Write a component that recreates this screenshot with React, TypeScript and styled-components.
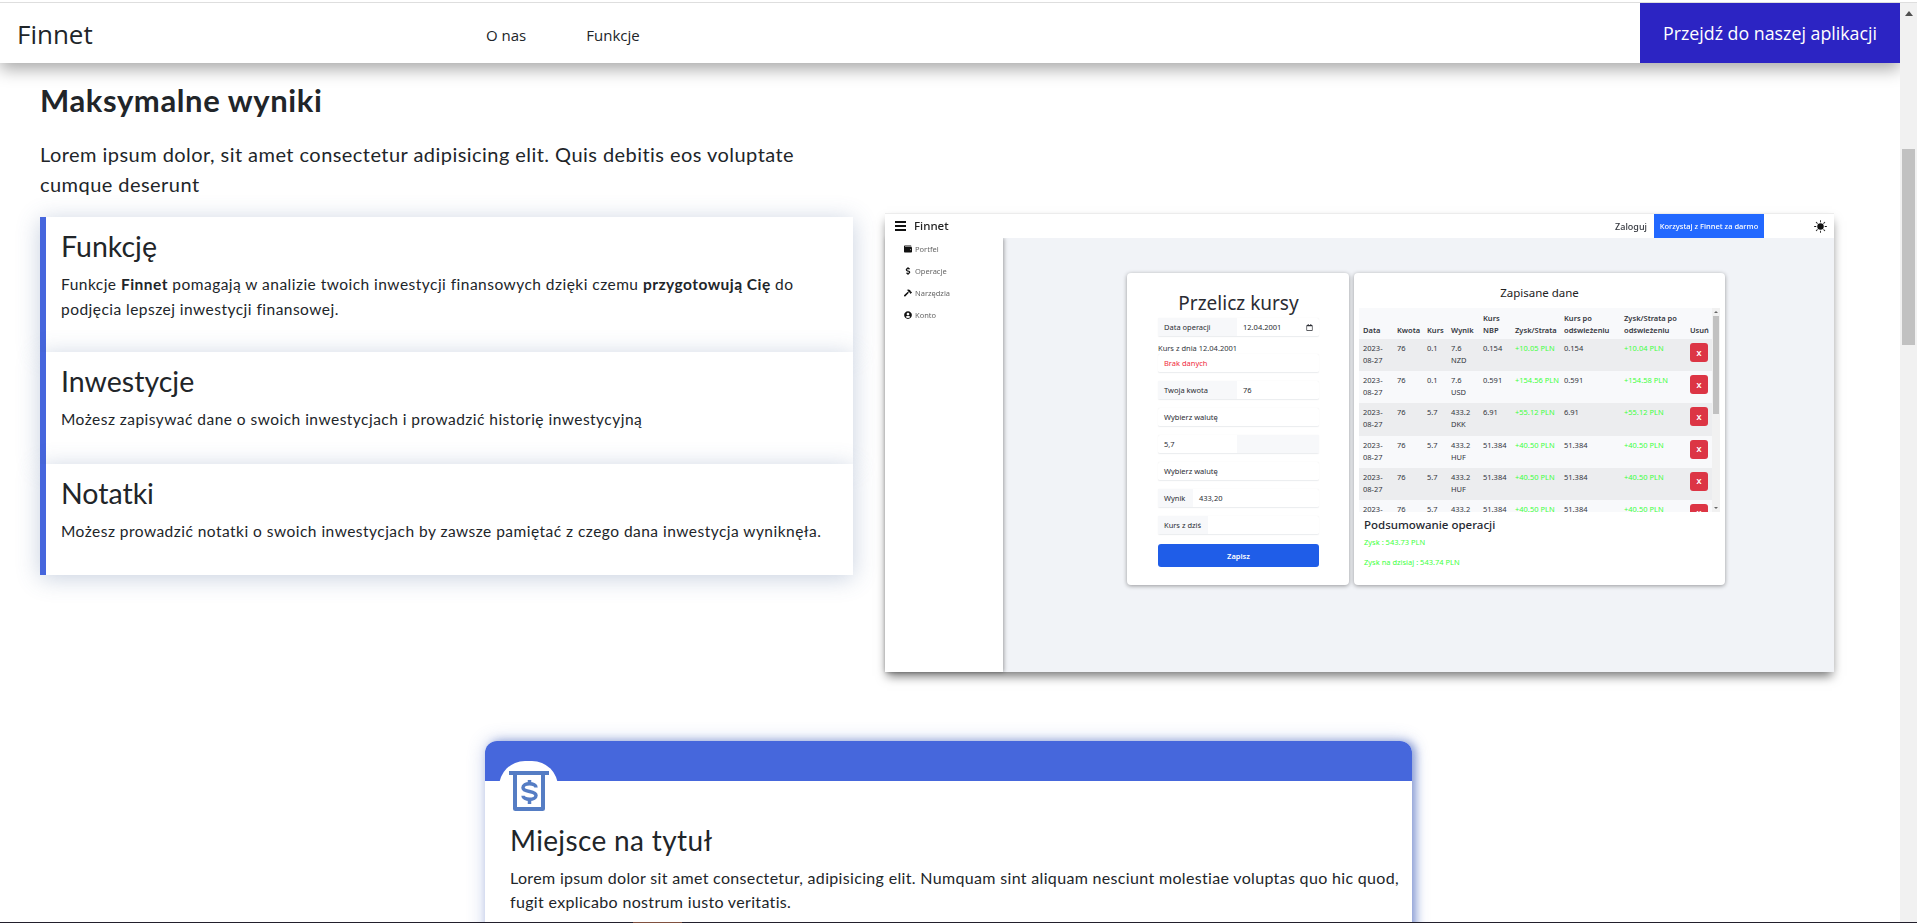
import React from 'react'
import styled, { createGlobalStyle } from 'styled-components'
import { FaWallet, FaDollarSign, FaHammer, FaUserCircle, FaRegCalendar } from 'react-icons/fa'
import { BsSunFill } from 'react-icons/bs'

const GlobalStyle = createGlobalStyle`
  html, body {
    margin: 0;
    padding: 0;
    background: #fff;
    overflow: hidden;
  }
  * {
    box-sizing: border-box;
  }
`

const Root = styled.div`
  width: 1917px;
  height: 923px;
  display: flex;
  flex-direction: column;
  overflow: hidden;
  font-family: 'Lato', sans-serif;
  color: #212529;
`

const TopEdge = styled.div`
  height: 3px;
  flex: none;
  background: #fff;
  border-bottom: 1px solid #dedede;
`

const Middle = styled.div`
  flex: 1;
  min-height: 0;
  display: flex;
`

const Page = styled.div`
  flex: 1;
  min-width: 0;
  overflow: hidden;
`

const Scrollbar = styled.div`
  width: 17px;
  flex: none;
  background: #f1f1f1;
  padding: 146px 2px 0;
  position: relative;
  z-index: 3;
`

const ScrollArrow = styled.div`
  position: absolute;
  top: 8px;
  left: 5px;
  border-left: 4px solid transparent;
  border-right: 4px solid transparent;
  border-bottom: 5px solid #505050;
`

const ScrollThumb = styled.div`
  height: 196px;
  background: #c1c1c1;
`

const BottomEdge = styled.div`
  height: 1px;
  flex: none;
  display: flex;
  background: #221f2c;
`

const EdgeGap = styled.div`
  width: 633px;
`

const EdgeMark = styled.div`
  width: 49px;
  background: #80503f;
`

const Nav = styled.nav`
  height: 60px;
  position: relative;
  z-index: 2;
  display: flex;
  align-items: center;
  background: #fff;
  box-shadow: 0 6px 16px rgba(0, 0, 0, 0.35);
`

const Brand = styled.div`
  width: 486px;
  padding: 2px 0 0 17px;
  font-family: 'Open Sans', sans-serif;
  font-size: 26px;
  line-height: 1;
`

const NavLinks = styled.div`
  flex: 1;
  display: flex;
  gap: 60px;
  padding-top: 3px;
  font-family: 'Open Sans', sans-serif;
  font-size: 15px;
`

const NavButton = styled.a`
  width: 260px;
  height: 100%;
  display: flex;
  align-items: center;
  justify-content: center;
  background: #2c24c3;
  color: #fff;
  font-family: 'Open Sans', sans-serif;
  font-size: 17.8px;
`

const Columns = styled.section`
  display: flex;
  align-items: flex-start;
  gap: 32px;
  padding-left: 40px;
`

const LeftColumn = styled.div`
  width: 813px;
  flex: none;
  padding-top: 16px;
`

const Heading = styled.h1`
  margin: 0;
  font-size: 31px;
  line-height: 42px;
  font-weight: 700;
  letter-spacing: 0.6px;
`

const Lead = styled.p`
  width: 770px;
  margin: 18px 0 0;
  font-size: 20px;
  line-height: 30px;
  letter-spacing: 0.45px;
`

const Features = styled.div`
  margin-top: 18px;
`

const Feature = styled.article`
  position: relative;
  padding: 10px 20px 0 15px;
  background: #fff;
  border-left: 6px solid #4666dd;
  box-shadow: 0 3px 22px rgba(70, 100, 150, 0.3);
`

const FeatureTitle = styled.h2`
  margin: 0;
  font-size: 28.5px;
  line-height: 38px;
  font-weight: 400;
`

const FeatureText = styled.p<{ $height: number }>`
  height: ${({ $height }) => $height}px;
  margin: 7px 0 0;
  font-size: 15.5px;
  line-height: 25px;
  letter-spacing: 0.47px;
`

const Shot = styled.div`
  width: 949px;
  height: 459px;
  flex: none;
  margin-top: 150px;
  display: flex;
  flex-direction: column;
  background: #fff;
  box-shadow: 0 6px 10px -2px rgba(0, 0, 0, 0.55);
  font-family: 'Noto Sans', sans-serif;
  font-size: 7.5px;
  color: #33363d;
`

const ShotBar = styled.div`
  height: 25px;
  flex: none;
  position: relative;
  z-index: 1;
  display: flex;
  align-items: center;
  padding-left: 10px;
  border-top: 1px solid #ececec;
  background: #fff;
  filter: blur(0.35px);
`

const Burger = styled.div`
  width: 11px;
  height: 10px;
  margin-right: 8px;
  border-top: 2px solid #111;
  border-bottom: 2px solid #111;
  position: relative;

  &::after {
    content: '';
    position: absolute;
    left: 0;
    right: 0;
    top: 2px;
    height: 2px;
    background: #111;
  }
`

const ShotBrand = styled.div`
  flex: 1;
  padding-bottom: 2px;
  font-size: 11.5px;
  font-weight: 500;
  color: #222;
`

const ShotLogin = styled.div`
  margin-right: 7px;
  font-size: 9px;
  font-weight: 500;
`

const ShotCta = styled.div`
  width: 110px;
  height: 24px;
  display: flex;
  align-items: center;
  justify-content: center;
  background: #2268ff;
  color: #fff;
  font-weight: 500;
`

const SunSlot = styled.div`
  width: 70px;
  display: flex;
  justify-content: flex-end;
  padding-right: 7px;
  font-size: 13px;
  color: #111;
`

const ShotBody = styled.div`
  flex: 1;
  min-height: 0;
  display: flex;
  filter: blur(0.35px);
`

const Sidebar = styled.div`
  width: 118px;
  flex: none;
  position: relative;
  background: #fff;
  box-shadow: 1px 0 4px rgba(0, 0, 0, 0.35);
`

const SideItem = styled.div`
  height: 22px;
  display: flex;
  align-items: center;
  gap: 3px;
  padding-left: 19px;
  color: #666;
  font-size: 7.5px;

  svg {
    width: 8px;
    height: 8px;
    color: #111;
  }
`

const ShotMain = styled.div`
  flex: 1;
  display: flex;
  align-items: flex-start;
  gap: 5px;
  padding: 35px 0 0 124px;
  background: #f1f3f7;
`

const ShotCard = styled.div<{ $width: number }>`
  width: ${({ $width }) => $width}px;
  height: 312px;
  flex: none;
  background: #fff;
  border-radius: 4px;
  box-shadow: 0 1px 4px rgba(0, 0, 0, 0.38);
`

const ConvertCard = styled(ShotCard)`
  padding: 18px 30px 0 31px;
`

const ConvertTitle = styled.div`
  margin-bottom: 3px;
  text-align: center;
  font-size: 19px;
  line-height: 24px;
  color: #2a2c33;
`

const FormRow = styled.div<{ $gap?: number }>`
  height: 19px;
  display: flex;
  margin-bottom: ${({ $gap }) => $gap ?? 8}px;
  border-radius: 2px;
  border-bottom: 1px solid #eceef0;
  line-height: 18px;
  font-size: 7.5px;
  box-shadow: 0 0 1px rgba(0, 0, 0, 0.1);
`

const FormCell = styled.div<{ $width?: number; $shade?: boolean }>`
  ${({ $width }) => ($width ? `width: ${$width}px; flex: none;` : 'flex: 1;')}
  display: flex;
  align-items: center;
  justify-content: space-between;
  padding: 0 6px;
  background: ${({ $shade }) => ($shade ? '#f7f8fa' : 'transparent')};
  color: #2a2c33;

  svg {
    width: 7px;
    height: 7px;
  }
`

const RateLabel = styled.div`
  height: 10px;
  margin-bottom: 1px;
  line-height: 10px;
  font-size: 7.5px;
`

const ErrorText = styled.span`
  color: #f0293c;
`

const SaveButton = styled.div`
  height: 23px;
  margin-top: 9px;
  display: flex;
  align-items: center;
  justify-content: center;
  border-radius: 3px;
  background: #1f5de8;
  color: #fff;
  font-weight: 600;
`

const TableCard = styled(ShotCard)`
  padding: 12px 5px 0;
`

const TableTitle = styled.div`
  height: 23px;
  text-align: center;
  font-size: 11.5px;
  line-height: 16px;
  color: #222;
`

const TableBox = styled.div`
  height: 204px;
  display: flex;
  overflow: hidden;
`

const DataTable = styled.table`
  width: 353px;
  flex: none;
  align-self: flex-start;
  table-layout: fixed;
  border-collapse: collapse;
  font-size: 7.5px;
  line-height: 12px;

  th {
    height: 31px;
    padding: 0 0 3px 4px;
    vertical-align: bottom;
    text-align: left;
    font-weight: 600;
    background: #f8f9fb;
  }

  td {
    height: 32.2px;
    padding: 3px 0 0 4px;
    vertical-align: top;
  }

  td:nth-child(4) {
    padding-right: 10px;
  }

  tbody tr:nth-child(odd) td {
    background: #ecedef;
  }

  tbody tr:nth-child(even) td {
    background: #f8f9fb;
  }
`

const Gain = styled.td`
  color: #3dff3d;
`

const DeleteButton = styled.div`
  width: 18px;
  height: 19px;
  margin-top: 1px;
  display: flex;
  align-items: center;
  justify-content: center;
  border-radius: 3px;
  background: #dc3545;
  color: #fff;
  font-weight: 700;
`

const MiniScroll = styled.div`
  width: 8px;
  flex: none;
  position: relative;
  padding: 8px 1px 0;
  background: #f1f1f1;
`

const MiniThumb = styled.div`
  height: 98px;
  background: #c1c1c1;
`

const MiniArrow = styled.div<{ $down?: boolean }>`
  position: absolute;
  left: 2px;
  ${({ $down }) => ($down ? 'bottom: 3px;' : 'top: 3px;')}
  border-left: 2px solid transparent;
  border-right: 2px solid transparent;
  ${({ $down }) => ($down ? 'border-top' : 'border-bottom')}: 2px solid #666;
`

const Summary = styled.div`
  padding: 5px 5px 0;
`

const SummaryTitle = styled.div`
  margin-bottom: 5px;
  font-size: 11.5px;
  line-height: 15px;
  font-weight: 500;
  color: #262830;
`

const SummaryLine = styled.div`
  height: 20px;
  line-height: 10px;
  color: #3dff3d;
`

const InfoCard = styled.article`
  width: 927px;
  height: 300px;
  margin: 69px 0 0 485px;
  background: #fff;
  border-radius: 12px 12px 0 0;
  box-shadow: 0 0 18px rgba(70, 100, 190, 0.3), 4px 0 9px rgba(70, 100, 190, 0.55);
`

const InfoBand = styled.div`
  height: 40px;
  background: #4667dc;
  border-radius: 12px 12px 0 0;
`

const IconBump = styled.div`
  width: 59px;
  height: 51px;
  margin: -20px 0 0 14px;
  padding: 10px 0 0 10px;
  background: #fff;
  border-radius: 26px 26px 0 0;
`

const InfoBody = styled.div`
  padding: 0 5px 0 25px;
`

const InfoTitle = styled.h2`
  margin: 8px 0 0;
  font-size: 28px;
  line-height: 40px;
  font-weight: 400;
  letter-spacing: 0.36px;
`

const InfoText = styled.p`
  margin: 6px 0 0;
  font-size: 16px;
  line-height: 24px;
  letter-spacing: 0.33px;
`

const sideItems = [
  { icon: <FaWallet />, label: 'Portfel' },
  { icon: <FaDollarSign />, label: 'Operacje' },
  { icon: <FaHammer />, label: 'Narzędzia' },
  { icon: <FaUserCircle />, label: 'Konto' },
]

const rows = [
  ['0.1', '7.6 NZD', '0.154', '+10.05 PLN', '+10.04 PLN'],
  ['0.1', '7.6 USD', '0.591', '+154.56 PLN', '+154.58 PLN'],
  ['5.7', '433.2 DKK', '6.91', '+55.12 PLN', '+55.12 PLN'],
  ['5.7', '433.2 HUF', '51.384', '+40.50 PLN', '+40.50 PLN'],
  ['5.7', '433.2 HUF', '51.384', '+40.50 PLN', '+40.50 PLN'],
  ['5.7', '433.2 HUF', '51.384', '+40.50 PLN', '+40.50 PLN'],
]

const colWidths = [34, 30, 24, 32, 32, 49, 60, 66, 26]

const AtmIcon = () => (
  <svg width="40" height="40" viewBox="0 0 40 40" fill="none">
    <rect x="0" y="0" width="40" height="4" fill="#557dc4" />
    <path d="M6 2v35.500a.5.5 0 0 0 .5.5h27a.5.5 0 0 0 .5-.5V2" stroke="#557dc4" strokeWidth="4" />
    <path
      d="M27 16.500c0-2-2.800-3.800-6.500-3.800s-6.500 1.600-6.500 4 2.800 3.100 6.500 3.800 6.500 1.800 6.500 4-2.800 3.800-6.500 3.800-6.500-1.600-6.500-3.600"
      stroke="#557dc4"
      strokeWidth="3.500"
    />
    <path d="M20.500 9v3.500M20.500 29v4" stroke="#557dc4" strokeWidth="3.500" />
  </svg>
)

const App: React.FC = () => {
  return (
    <Root>
      <GlobalStyle />
      <TopEdge />
      <Middle>
        <Page>
          <Nav>
            <Brand>Finnet</Brand>
            <NavLinks>
              <span>O nas</span>
              <span>Funkcje</span>
            </NavLinks>
            <NavButton>Przejdź do naszej aplikacji</NavButton>
          </Nav>

          <Columns>
            <LeftColumn>
              <Heading>Maksymalne wyniki</Heading>
              <Lead>
                Lorem ipsum dolor, sit amet consectetur adipisicing elit. Quis debitis eos voluptate cumque deserunt
              </Lead>
              <Features>
                <Feature>
                  <FeatureTitle>Funkcję</FeatureTitle>
                  <FeatureText $height={80}>
                    Funkcje <b>Finnet</b> pomagają w analizie twoich inwestycji finansowych dzięki czemu{' '}
                    <b>przygotowują Cię</b> do podjęcia lepszej inwestycji finansowej.
                  </FeatureText>
                </Feature>
                <Feature>
                  <FeatureTitle>Inwestycje</FeatureTitle>
                  <FeatureText $height={57}>
                    Możesz zapisywać dane o swoich inwestycjach i prowadzić historię inwestycyjną
                  </FeatureText>
                </Feature>
                <Feature>
                  <FeatureTitle>Notatki</FeatureTitle>
                  <FeatureText $height={56}>
                    Możesz prowadzić notatki o swoich inwestycjach by zawsze pamiętać z czego dana inwestycja wyniknęła.
                  </FeatureText>
                </Feature>
              </Features>
            </LeftColumn>

            <Shot>
              <ShotBar>
                <Burger />
                <ShotBrand>Finnet</ShotBrand>
                <ShotLogin>Zaloguj</ShotLogin>
                <ShotCta>Korzystaj z Finnet za darmo</ShotCta>
                <SunSlot>
                  <BsSunFill />
                </SunSlot>
              </ShotBar>
              <ShotBody>
                <Sidebar>
                  {sideItems.map((item) => (
                    <SideItem key={item.label}>
                      {item.icon}
                      {item.label}
                    </SideItem>
                  ))}
                </Sidebar>
                <ShotMain>
                  <ConvertCard $width={222}>
                    <ConvertTitle>Przelicz kursy</ConvertTitle>
                    <FormRow $gap={6}>
                      <FormCell $width={79} $shade>
                        Data operacji
                      </FormCell>
                      <FormCell>
                        12.04.2001
                        <FaRegCalendar />
                      </FormCell>
                    </FormRow>
                    <RateLabel>Kurs z dnia 12.04.2001</RateLabel>
                    <FormRow>
                      <FormCell>
                        <ErrorText>Brak danych</ErrorText>
                      </FormCell>
                    </FormRow>
                    <FormRow>
                      <FormCell $width={79} $shade>
                        Twoja kwota
                      </FormCell>
                      <FormCell>76</FormCell>
                    </FormRow>
                    <FormRow>
                      <FormCell>Wybierz walutę</FormCell>
                    </FormRow>
                    <FormRow>
                      <FormCell $width={79}>5,7</FormCell>
                      <FormCell $shade />
                    </FormRow>
                    <FormRow>
                      <FormCell>Wybierz walutę</FormCell>
                    </FormRow>
                    <FormRow>
                      <FormCell $width={35} $shade>
                        Wynik
                      </FormCell>
                      <FormCell>433,20</FormCell>
                    </FormRow>
                    <FormRow>
                      <FormCell $width={50} $shade>
                        Kurs z dziś
                      </FormCell>
                      <FormCell />
                    </FormRow>
                    <SaveButton>Zapisz</SaveButton>
                  </ConvertCard>

                  <TableCard $width={371}>
                    <TableTitle>Zapisane dane</TableTitle>
                    <TableBox>
                      <DataTable>
                        <colgroup>
                          {colWidths.map((w, i) => (
                            <col key={i} width={w} />
                          ))}
                        </colgroup>
                        <thead>
                          <tr>
                            <th>Data</th>
                            <th>Kwota</th>
                            <th>Kurs</th>
                            <th>Wynik</th>
                            <th>Kurs NBP</th>
                            <th>Zysk/Strata</th>
                            <th>Kurs po odświeżeniu</th>
                            <th>Zysk/Strata po odświeżeniu</th>
                            <th>Usuń</th>
                          </tr>
                        </thead>
                        <tbody>
                          {rows.map((row, i) => (
                            <tr key={i}>
                              <td>2023-08-27</td>
                              <td>76</td>
                              <td>{row[0]}</td>
                              <td>{row[1]}</td>
                              <td>{row[2]}</td>
                              <Gain>{row[3]}</Gain>
                              <td>{row[2]}</td>
                              <Gain>{row[4]}</Gain>
                              <td>
                                <DeleteButton>X</DeleteButton>
                              </td>
                            </tr>
                          ))}
                        </tbody>
                      </DataTable>
                      <MiniScroll>
                        <MiniArrow />
                        <MiniThumb />
                        <MiniArrow $down />
                      </MiniScroll>
                    </TableBox>
                    <Summary>
                      <SummaryTitle>Podsumowanie operacji</SummaryTitle>
                      <SummaryLine>Zysk : 543.73 PLN</SummaryLine>
                      <SummaryLine>Zysk na dzisiaj : 543.74 PLN</SummaryLine>
                    </Summary>
                  </TableCard>
                </ShotMain>
              </ShotBody>
            </Shot>
          </Columns>

          <InfoCard>
            <InfoBand />
            <IconBump>
              <AtmIcon />
            </IconBump>
            <InfoBody>
              <InfoTitle>Miejsce na tytuł</InfoTitle>
              <InfoText>
                Lorem ipsum dolor sit amet consectetur, adipisicing elit. Numquam sint aliquam nesciunt molestiae
                voluptas quo hic quod, fugit explicabo nostrum iusto veritatis.
              </InfoText>
            </InfoBody>
          </InfoCard>
        </Page>
        <Scrollbar>
          <ScrollArrow />
          <ScrollThumb />
        </Scrollbar>
      </Middle>
      <BottomEdge>
        <EdgeGap />
        <EdgeMark />
      </BottomEdge>
    </Root>
  )
}

export default App
